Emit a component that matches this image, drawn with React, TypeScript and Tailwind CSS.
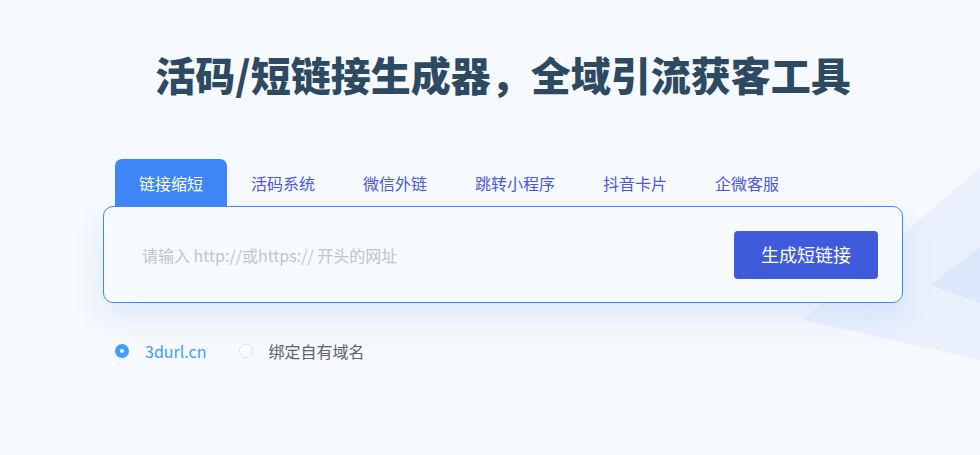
import { useState } from 'react'

const tabs = ['链接缩短', '活码系统', '微信外链', '跳转小程序', '抖音卡片', '企微客服']

export default function App() {
  const [active, setActive] = useState(0)
  const [domain, setDomain] = useState('3durl')
  const [url, setUrl] = useState('')

  return (
    <div
      className="relative w-[980px] h-[455px] overflow-hidden bg-[#f6f9fd]"
      style={{ fontFamily: '"Noto Sans CJK SC", "Noto Sans", sans-serif' }}
    >
      {/* background decoration */}
      <svg className="absolute inset-0 pointer-events-none" width="980" height="455" viewBox="0 0 980 455">
        <polygon points="803,320 980,168 980,360" fill="#eaf1fd" />
        <polygon points="930,285 980,247 980,303" fill="#dce8fb" />
      </svg>

      <div className="relative ml-[103px] w-[800px] pt-[46px]">
        <h1 className="text-center text-[40px] leading-[56px] font-black text-[#2d4a62]">
          活码/短链接生成器，全域引流获客工具
        </h1>

        <div className="mt-[57px] flex pl-[12px]">
          {tabs.map((t, i) => (
            <button
              key={t}
              onClick={() => setActive(i)}
              className={
                i === active
                  ? 'h-[47px] px-6 rounded-t-[7px] bg-[#3e86f5] text-white text-[16px]'
                  : 'h-[47px] px-6 text-[#4b58d8] text-[16px]'
              }
            >
              {t}
            </button>
          ))}
        </div>

        <div className="flex items-center h-[97px] pl-[38px] pr-[24px] border border-[#3f87f5] rounded-[10px] bg-[#f7fafe] shadow-[0_14px_30px_rgba(70,120,230,0.13)]">
          <input
            value={url}
            onChange={(e) => setUrl(e.target.value)}
            placeholder="请输入 http://或https:// 开头的网址"
            className="flex-1 bg-transparent outline-none text-[16px] text-[#333] placeholder:text-[#c0c4cc]"
          />
          <button className="w-[144px] h-[48px] rounded-[4px] bg-[#3f5adb] text-white text-[18px]">
            生成短链接
          </button>
        </div>

        <div className="mt-[36px] flex items-center pl-[12px] text-[16px]">
          <label className="flex items-center cursor-pointer mr-[33px]" onClick={() => setDomain('3durl')}>
            <span
              className={
                domain === '3durl'
                  ? 'w-[14px] h-[14px] rounded-full bg-[#409eff] flex items-center justify-center'
                  : 'w-[14px] h-[14px] rounded-full bg-white border border-[#dcdfe6]'
              }
            >
              {domain === '3durl' && <span className="w-[4px] h-[4px] rounded-full bg-white" />}
            </span>
            <span className={domain === '3durl' ? 'ml-[16px] text-[#409eff]' : 'ml-[16px] text-[#606266]'}>3durl.cn</span>
          </label>
          <label className="flex items-center cursor-pointer" onClick={() => setDomain('own')}>
            <span
              className={
                domain === 'own'
                  ? 'w-[14px] h-[14px] rounded-full bg-[#409eff] flex items-center justify-center'
                  : 'w-[14px] h-[14px] rounded-full bg-white border border-[#dcdfe6]'
              }
            >
              {domain === 'own' && <span className="w-[4px] h-[4px] rounded-full bg-white" />}
            </span>
            <span className={domain === 'own' ? 'ml-[15px] text-[#409eff]' : 'ml-[15px] text-[#606266]'}>绑定自有域名</span>
          </label>
        </div>
      </div>
    </div>
  )
}
